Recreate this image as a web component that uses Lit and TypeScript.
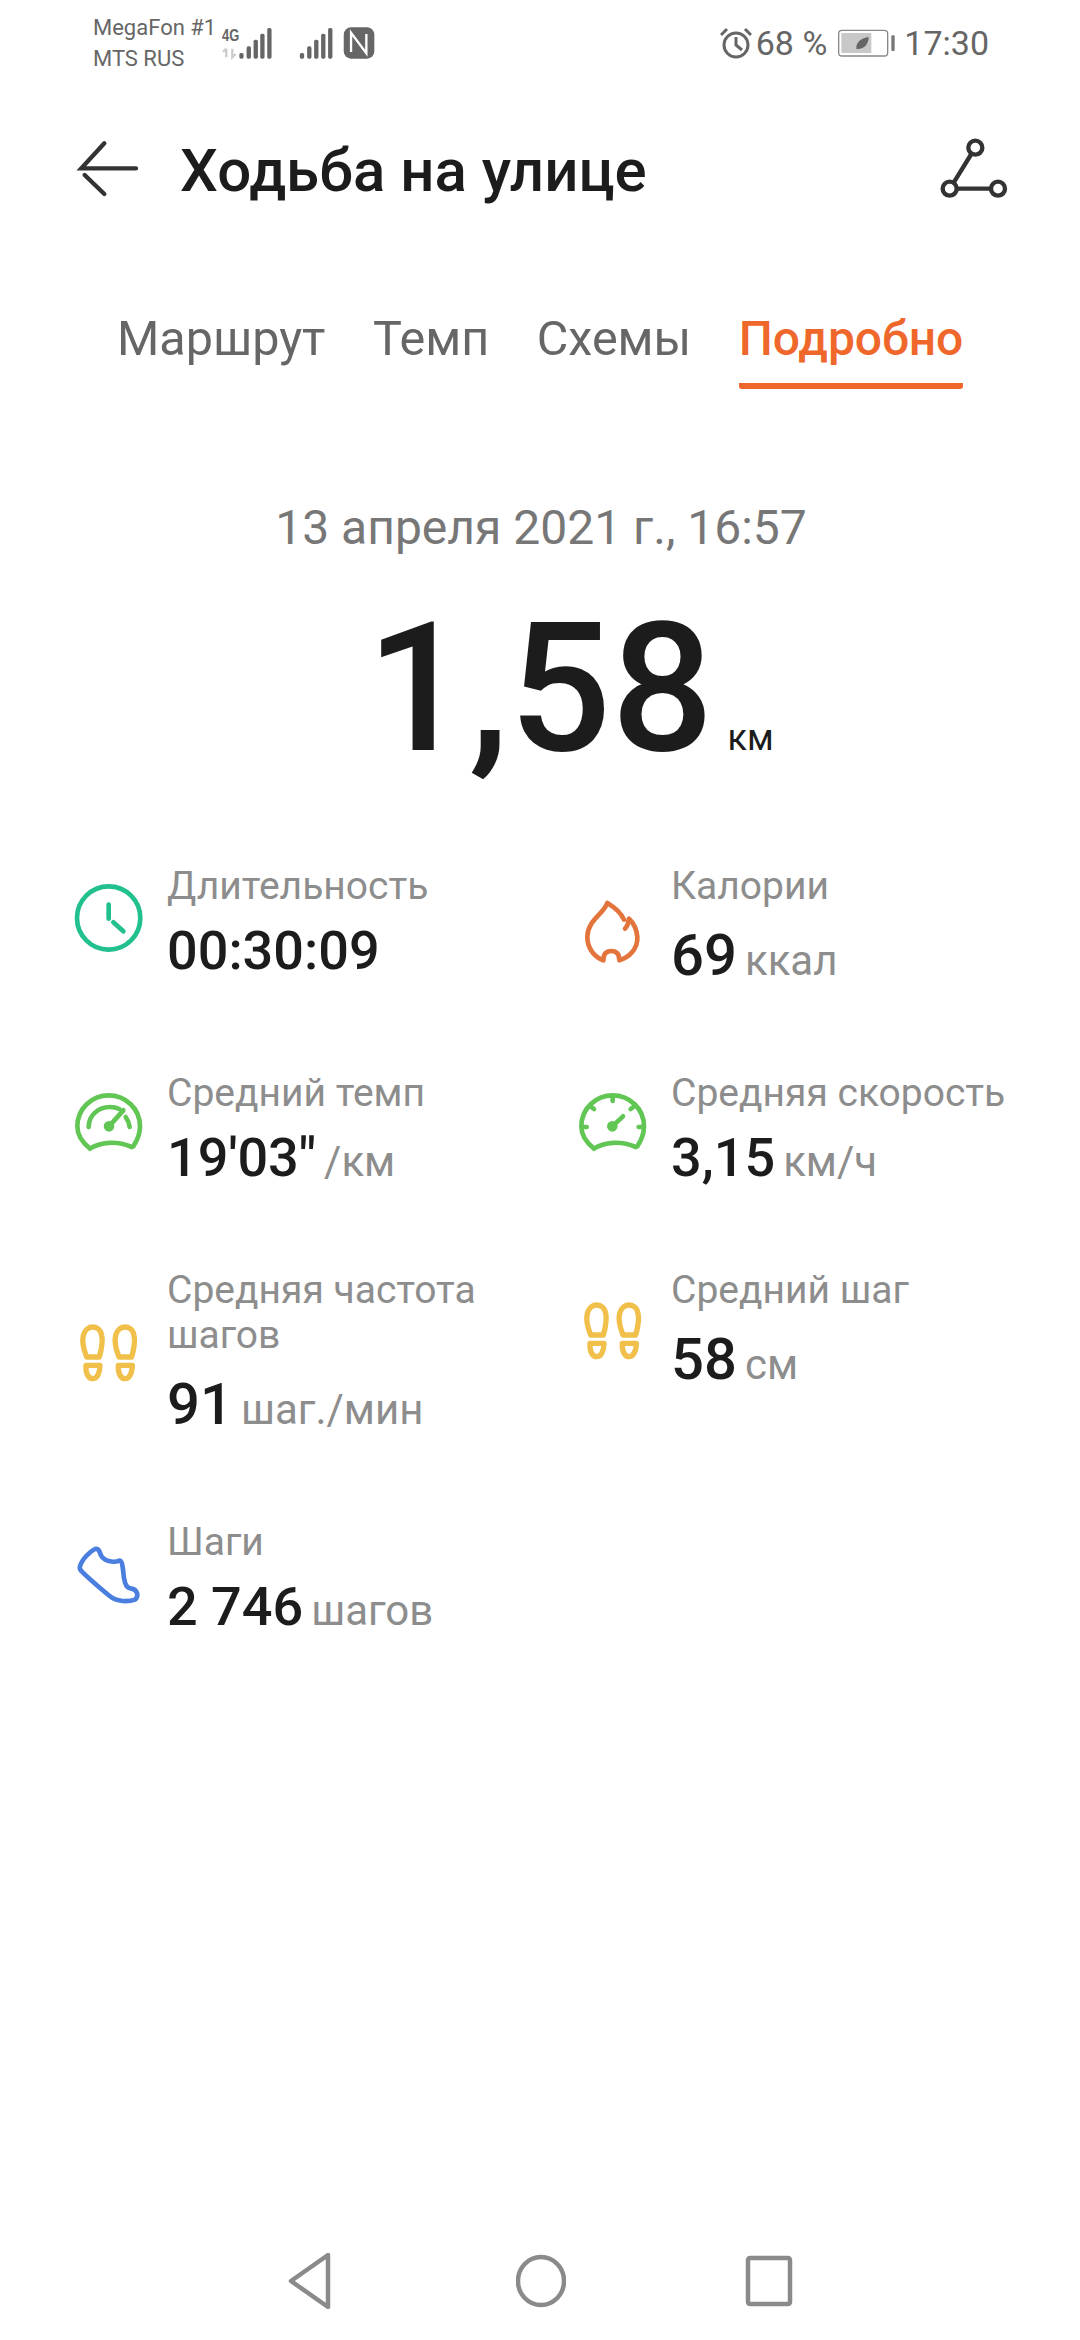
import { LitElement, html, svg, css } from 'lit';
import { customElement } from 'lit/decorators.js';
import { classMap } from 'lit/directives/class-map.js';
import type { TemplateResult } from 'lit';

interface Metric
{
  label: string;
  value: string;
  unit: string;
  big?: boolean;
  icon: TemplateResult;
}

const gaugeColor = '#62c655';

const icons = {
  clock: svg`<g stroke="#21c08e"><circle cx="146" cy="150" r="95"/><path d="M146 110V152M160 163L190 190"/></g>`,
  flame: svg`<path stroke="#e3743c" d="M130 78C120 110 70 130 70 180C70 215 92 240 118 250C118 230 128 222 142 222C156 222 166 230 166 250C195 242 222 215 220 180C218 155 208 137 195 125C193 140 188 150 183 155M130 78C150 90 170 105 180 128"/>`,
  pace: svg`<g stroke="${gaugeColor}"><path d="M90 215C120 195 170 190 215 210M90 215C65 195 52 175 52 148C52 95 95 55 146 55C197 55 240 95 240 148C240 172 232 190 220 208"/><path d="M86 150C86 115 115 90 150 90C160 90 170 92 178 96M197 120C204 130 208 140 209 150"/><path d="M147 148L190 100"/><circle cx="147" cy="148" r="9"/></g>`,
  speed: svg`<g stroke="${gaugeColor}"><path d="M90 215C120 195 170 190 215 210M90 215C65 195 52 175 52 148C52 95 95 55 146 55C197 55 240 95 240 148C240 172 232 190 220 208"/><path d="M58 150H68M82 90L90 96M146 60V72M208 90L200 96M234 150H224"/><path d="M145 148L177 118"/><circle cx="145" cy="148" r="9"/></g>`,
  steps: svg`<g stroke="#f0c04a" style="stroke-width:16"><path style="stroke-width:16" d="M80 135C70 110 65 90 70 70C75 52 88 45 98 45C108 45 122 52 125 70C130 90 125 110 118 135ZM78 160H120C120 185 110 200 98 200C86 200 76 185 78 160Z"/><path style="stroke-width:16" transform="translate(97 0)" d="M80 135C70 110 65 90 70 70C75 52 88 45 98 45C108 45 122 52 125 70C130 90 125 110 118 135ZM78 160H120C120 185 110 200 98 200C86 200 76 185 78 160Z"/></g>`,
  shoe: svg`<path stroke="#4a7fe0" d="M60 115C65 95 90 70 105 63C115 60 118 68 122 80C130 100 160 105 178 98C188 98 188 120 192 150C195 170 200 180 215 182C232 185 238 205 225 215C205 222 170 222 150 205C120 180 90 155 65 130C60 125 58 120 60 115Z"/>`
};

const metrics: Metric[] = [
  { label: 'Длительность', value: '00:30:09', unit: '', icon: html`<svg class="icon" viewBox="0 30 300 300">${icons.clock}</svg>` },
  { label: 'Калории', value: '69', unit: 'ккал', big: true, icon: html`<svg class="icon" viewBox="0 27 300 300">${icons.flame}</svg>` },
  { label: 'Средний темп', value: '19\'03"', unit: '/км', icon: html`<svg class="icon" viewBox="0 30 300 300">${icons.pace}</svg>` },
  { label: 'Средняя скорость', value: '3,15', unit: 'км/ч', icon: html`<svg class="icon" viewBox="0 30 300 300">${icons.speed}</svg>` },
  { label: 'Средняя частота шагов', value: '91', unit: 'шаг./мин', big: true, icon: html`<svg class="icon" viewBox="0 0 300 300">${icons.steps}</svg>` },
  { label: 'Средний шаг', value: '58', unit: 'см', big: true, icon: html`<svg class="icon" viewBox="0 0 300 300">${icons.steps}</svg>` },
  { label: 'Шаги', value: '2 746', unit: 'шагов', icon: html`<svg class="icon" viewBox="0 24 300 300">${icons.shoe}</svg>` }
];

@customElement('app-root')
export class AppRoot extends LitElement
{
  static styles = css`
    :host {
      display: flex;
      flex-direction: column;
      width: 1080px;
      height: 2340px;
      background: #fff;
      color: #1c1c1c;
      font-family: Roboto, "Noto Sans", sans-serif;
      overflow: hidden;
    }
    .status {
      display: flex;
      align-items: center;
      height: 86px;
      padding: 0 91px 0 93px;
      color: #666;
      box-sizing: border-box;
    }
    .carriers {
      width: 129px;
      font-size: 22px;
      line-height: 31px;
      white-space: nowrap;
    }
    .radios { width: 153px; height: 34px; }
    .status-right {
      display: flex;
      align-items: center;
      margin-left: auto;
      font-size: 34px;
    }
    .alarm { width: 32px; height: 32px; margin-right: 4px; }
    .battery { width: 60px; height: 30px; margin: 0 7px 0 10px; }
    .header {
      display: flex;
      align-items: center;
      height: 172px;
      padding: 0 48px 4px 50px;
      box-sizing: border-box;
    }
    .back { width: 100px; height: 100px; margin-right: 30px; }
    .title { font-size: 60px; font-weight: 500; flex: 1; }
    .route { width: 110px; height: 100px; }
    .tabs {
      display: flex;
      gap: 47.5px;
      padding-left: 117px;
      height: 128px;
      font-size: 48.5px;
      color: #666;
    }
    .tab { height: 125px; line-height: 162px; }
    .tab.active {
      color: #f0672b;
      font-size: 48px;
      font-weight: 500;
      border-bottom: 6px solid #f0672b;
      border-radius: 0 0 3px 3px;
    }
    .date {
      margin-top: 112px;
      padding-left: 2px;
      text-align: center;
      font-size: 48px;
      line-height: 60px;
      color: #777;
    }
    .total {
      display: flex;
      justify-content: center;
      align-items: baseline;
      height: 178px;
      margin-top: 42px;
      padding-left: 60px;
      font-size: 180px;
      line-height: 178px;
      font-weight: 500;
    }
    .total small { font-size: 36px; font-weight: 400; margin-left: 14px; }
    .grid {
      display: grid;
      grid-template-columns: 504px 1fr;
      grid-template-rows: 207px 197px 252px auto;
      align-items: start;
      margin-top: 86px;
      padding-left: 60px;
    }
    .item { display: flex; align-items: center; }
    .icon {
      flex: none;
      width: 100px;
      height: 100px;
      margin-right: 7px;
    }
    .icon * { fill: none; stroke-width: 14; stroke-linecap: round; stroke-linejoin: round; }
    .label { font-size: 39px; line-height: 45px; color: #8d8d8d; }
    .value { font-size: 54px; line-height: 83px; font-weight: 500; white-space: nowrap; }
    .value.big { font-size: 58px; line-height: 92px; }
    .unit { font-size: 42px; font-weight: 400; color: #8d8d8d; margin-left: 8px; }
    .nav {
      display: flex;
      align-items: center;
      margin-top: auto;
      height: 118px;
      padding: 0 286px 0 288px;
      justify-content: space-between;
    }
    .nav svg { width: 50px; height: 56px; }
    .nav * { fill: none; stroke: #8a8a8a; stroke-width: 4.5; stroke-linejoin: round; }
  `;

  render(): TemplateResult
  {
    return html`
      <div class="status">
        <div class="carriers">MegaFon #1<br />MTS RUS</div>
        <svg class="radios" viewBox="485 78 460 94">
          <text x="485" y="120" font-family="Liberation Sans" font-weight="700" font-size="48" textLength="52" lengthAdjust="spacingAndGlyphs" fill="#666">4G</text>
          <path d="M498 142V168M488 152L498 142M516 142V168L526 158" fill="none" stroke="#ccc" stroke-width="7" />
          <g fill="#666">
            <rect x="537" y="155" width="13" height="17" rx="5" /><rect x="559" y="135" width="13" height="37" rx="5" /><rect x="580" y="115" width="13" height="57" rx="5" /><rect x="600" y="97" width="13" height="75" rx="5" /><rect x="621" y="80" width="13" height="92" rx="5" />
            <rect x="719" y="155" width="13" height="17" rx="5" /><rect x="741" y="135" width="13" height="37" rx="5" /><rect x="762" y="115" width="13" height="57" rx="5" /><rect x="783" y="97" width="13" height="75" rx="5" /><rect x="804" y="80" width="13" height="92" rx="5" />
            <rect x="851" y="78" width="92" height="94" rx="22" />
          </g>
          <path d="M873 152V94L919 156V98" fill="none" stroke="#fff" stroke-width="7" />
        </svg>
        <div class="status-right">
          <svg class="alarm" viewBox="0 0 32 32" fill="none" stroke="#666" stroke-width="3">
            <circle cx="16" cy="18" r="12" /><path d="M16 10V18L22 23M1 8L7 2M31 8L25 2" />
          </svg>
          <span>68 %</span>
          <svg class="battery" viewBox="440 85 180 86">
            <rect x="445" y="90" width="147" height="77" rx="10" fill="none" stroke="#888" stroke-width="4" />
            <rect x="453" y="98" width="90" height="60" fill="#c8c8c8" />
            <path d="M498 146C496 125 515 112 535 110C535 130 522 148 498 146Z" fill="#666" />
            <rect x="603" y="105" width="10" height="47" rx="3" fill="#777" />
          </svg>
          <span>17:30</span>
        </div>
      </div>

      <div class="header">
        <svg class="back" viewBox="0 0 300 300" fill="none" stroke="#333" stroke-width="13" stroke-linecap="round">
          <path d="M163 70L94 145H258M104 165L163 222" />
        </svg>
        <div class="title">Ходьба на улице</div>
        <svg class="route" viewBox="0 0 330 300" fill="none" stroke="#333" stroke-width="13">
          <circle cx="160" cy="83" r="21" /><circle cx="83" cy="206" r="21" /><circle cx="228" cy="206" r="21" />
          <path d="M148 102L95 188M105 206H206" />
        </svg>
      </div>

      <div class="tabs">
        <div class="tab">Маршрут</div>
        <div class="tab">Темп</div>
        <div class="tab">Схемы</div>
        <div class="tab active">Подробно</div>
      </div>

      <div class="date">13 апреля 2021 г., 16:57</div>
      <div class="total">1,58<small>км</small></div>

      <div class="grid">
        ${metrics.map((item) => html`
          <div class="item">
            ${item.icon}
            <div>
              <div class="label">${item.label}</div>
              <div class=${classMap({ value: true, big: item.big === true })}>${item.value}${item.unit !== '' ? html`<span class="unit">${item.unit}</span>` : ''}</div>
            </div>
          </div>
        `)}
      </div>

      <div class="nav">
        <svg viewBox="0 0 50 56"><path d="M40 2L3 28L40 54Z" /></svg>
        <svg viewBox="0 0 50 56"><ellipse cx="25" cy="28" rx="23" ry="24" /></svg>
        <svg viewBox="0 0 50 56"><rect x="4" y="5" width="42" height="46" rx="2" /></svg>
      </div>
    `;
  }
}
